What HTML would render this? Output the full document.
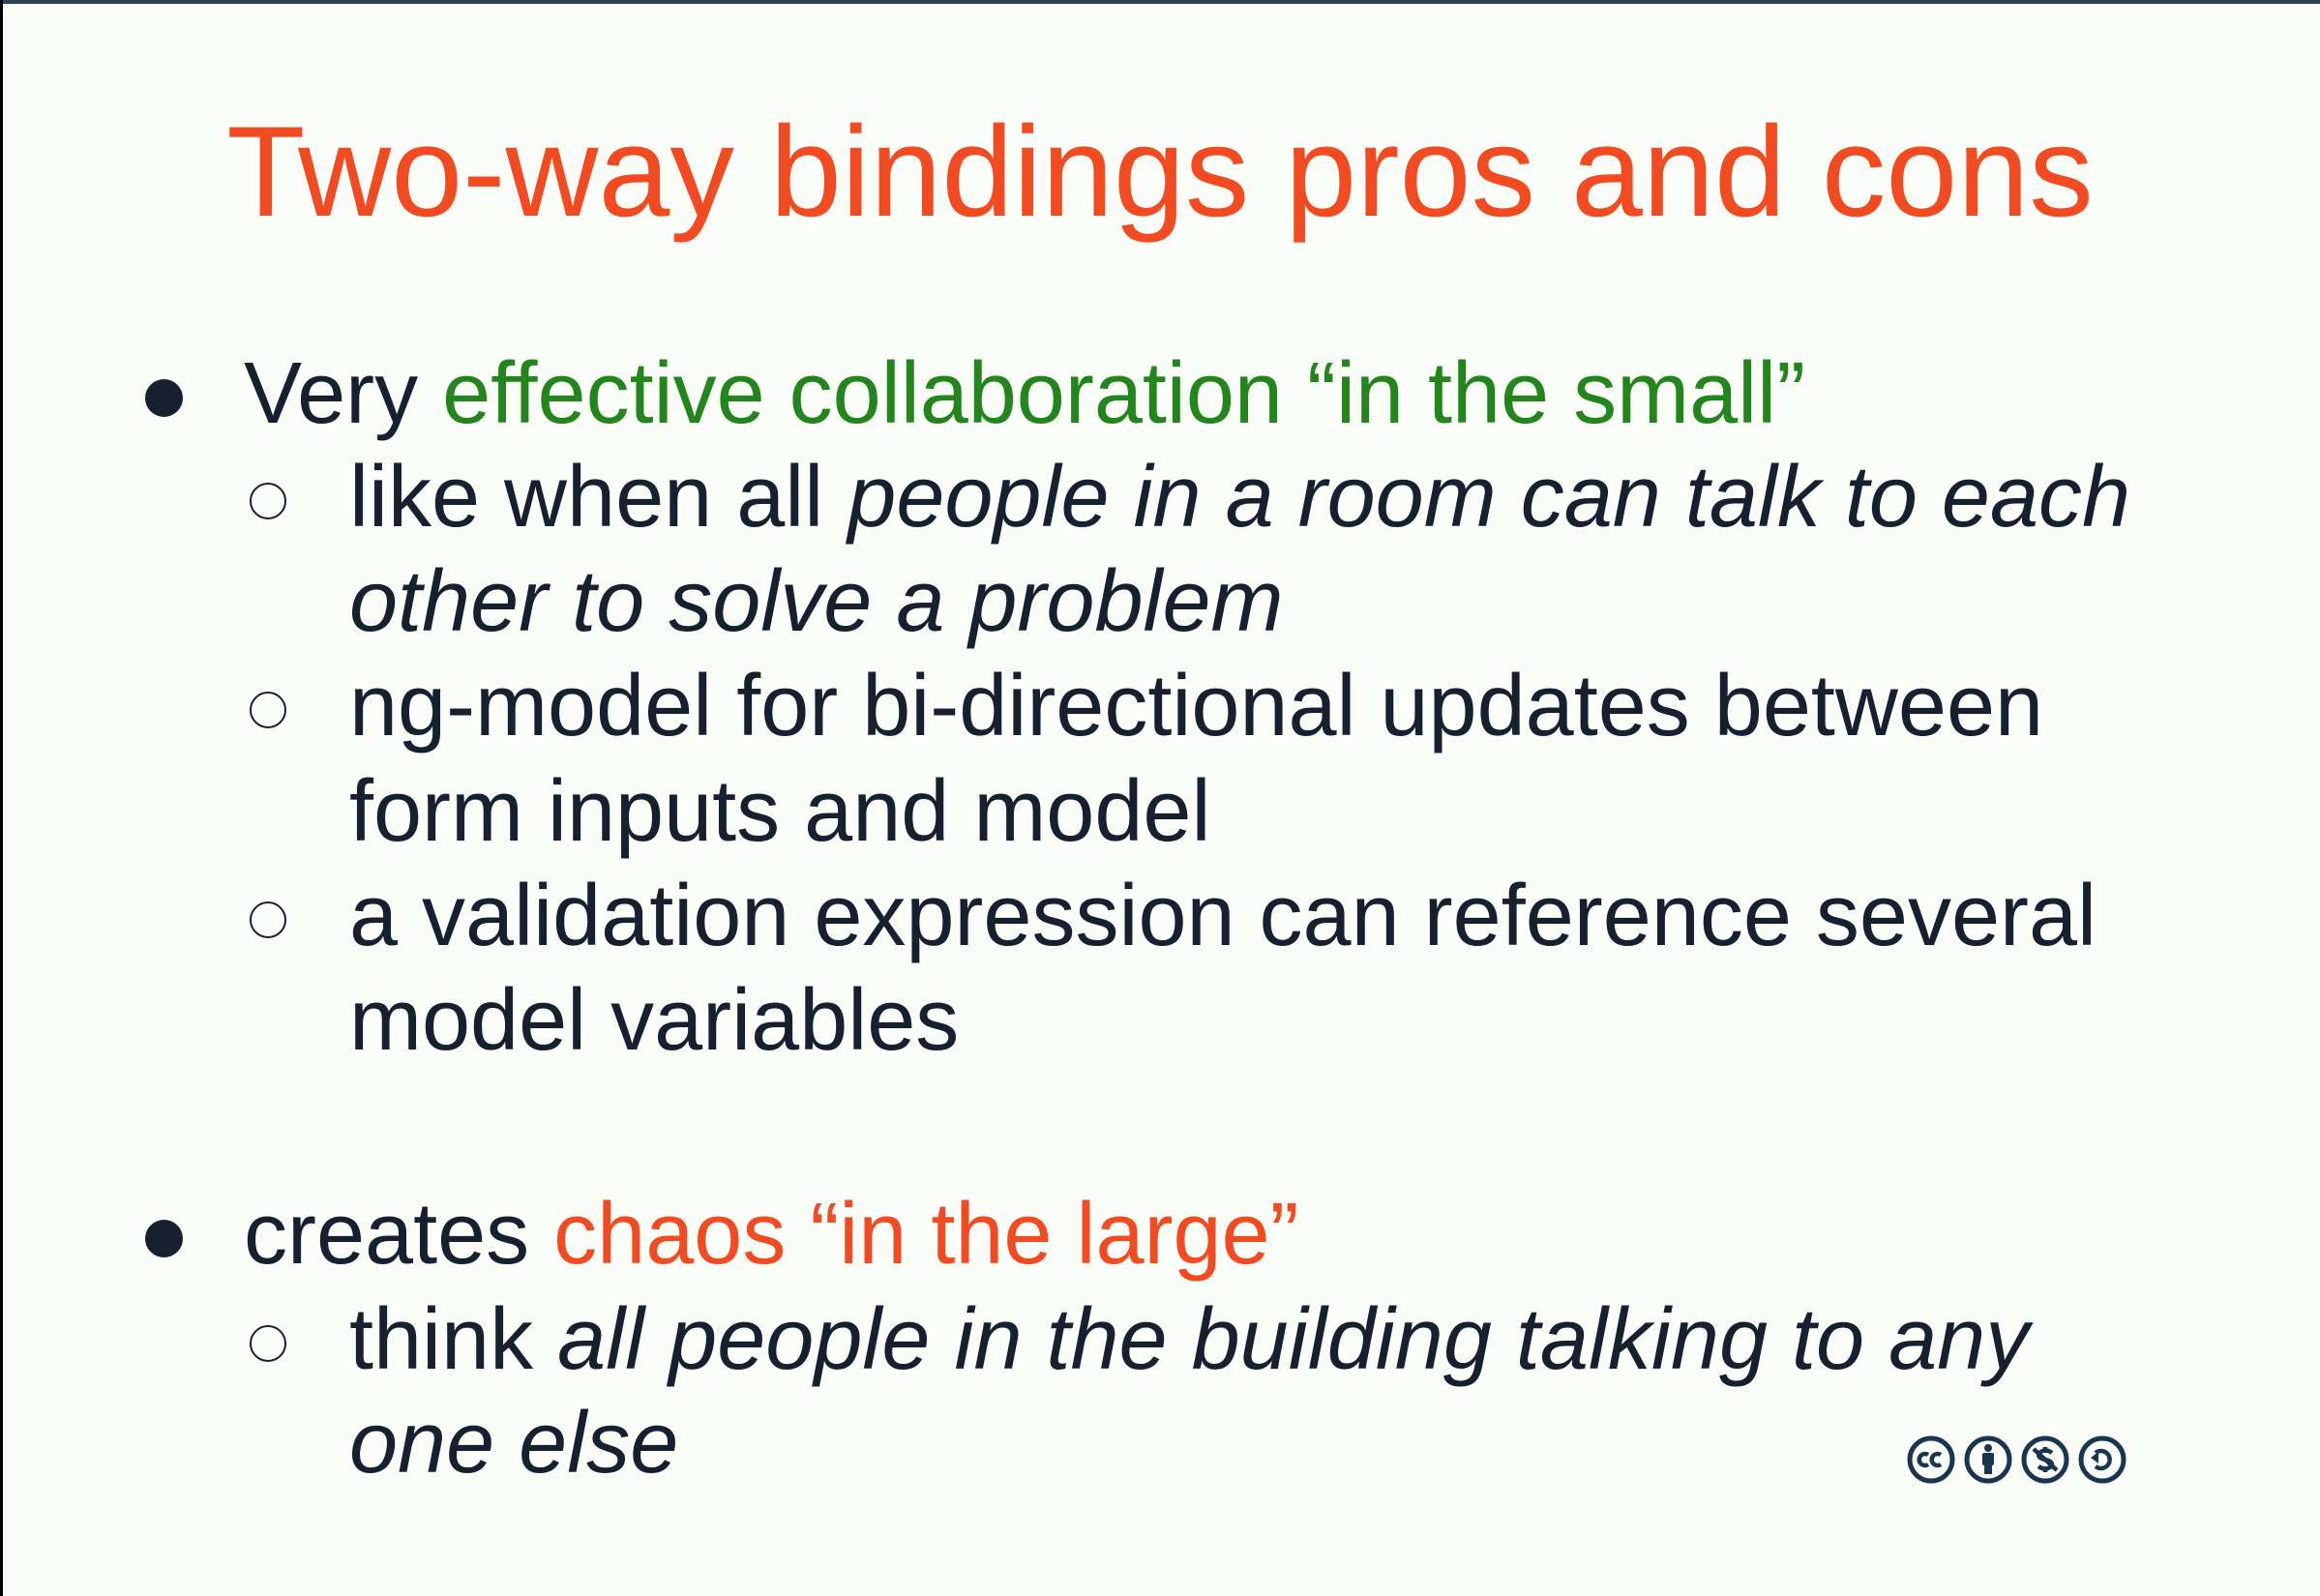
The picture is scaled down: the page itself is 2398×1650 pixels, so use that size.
<!DOCTYPE html>
<html><head><meta charset="utf-8"><style>
html,body{margin:0;padding:0}
body{width:2398px;height:1650px;background:#fbfef8;position:relative;overflow:hidden;font-family:"Liberation Sans",Arial,sans-serif;color:#17202f}
.topb{position:absolute;left:0;top:0;width:2398px;height:4px;background:#2c4455}
.leftb{position:absolute;left:0;top:0;width:3px;height:1650px;background:#000}
.t{position:absolute;white-space:nowrap;line-height:1;font-size:90px}
.title{position:absolute;left:0;width:2398px;text-align:center;top:112px;font-size:133px;line-height:1;color:#f24b22;white-space:nowrap}
.g{color:#23861c}.r{color:#f24b22}
i{font-style:italic}
.dot{position:absolute;width:39px;height:39px;border-radius:50%;background:#17202f}
.circ{position:absolute;width:34px;height:34px;border-radius:50%;border:2.5px solid #17202f}
</style></head><body>
<div class="topb"></div><div class="leftb"></div>
<div class="title">Two-way bindings pros and cons</div>

<div class="dot" style="left:150px;top:392px"></div>
<div class="t" style="left:252px;top:362px">Very <span class="g">effective collaboration “in the small”</span></div>

<div class="circ" style="left:258px;top:499px"></div>
<div class="t" style="left:361px;top:469px">like when all <i>people in a room can talk to each</i></div>
<div class="t" style="left:361px;top:577px"><i>other to solve a problem</i></div>

<div class="circ" style="left:258px;top:715px"></div>
<div class="t" style="left:361px;top:685px">ng-model for bi-directional updates between</div>
<div class="t" style="left:361px;top:794px">form inputs and model</div>

<div class="circ" style="left:258px;top:932px"></div>
<div class="t" style="left:361px;top:902px">a validation expression can reference several</div>
<div class="t" style="left:361px;top:1010px">model variables</div>

<div class="dot" style="left:150px;top:1261px"></div>
<div class="t" style="left:252px;top:1231px">creates <span class="r">chaos “in the large”</span></div>

<div class="circ" style="left:258px;top:1370px"></div>
<div class="t" style="left:361px;top:1340px">think <i>all people in the building talking to any</i></div>
<div class="t" style="left:361px;top:1447px"><i>one else</i></div>

<svg style="position:absolute;left:1970px;top:1482px" width="234" height="54" viewBox="0 0 234 54">
<g fill="none" stroke="#1a3550" stroke-width="5">
<circle cx="26" cy="27" r="22"/>
<circle cx="85" cy="27" r="22"/>
<circle cx="144" cy="27" r="22"/>
<circle cx="203" cy="27" r="22"/>
</g>
<g fill="none" stroke="#1a3550" stroke-width="4.5">
<path d="M23 22 a6 6 0 1 0 0 10"/>
<path d="M36 22 a6 6 0 1 0 0 10"/>
<path d="M132 16 L156 38"/>
<path d="M151 20 q-7 -5 -13 0 q-3 5 6 7 q9 2 6 7 q-6 5 -13 0"/>
<path d="M144 14 v6 M144 34 v6"/>
<path d="M196 20 a9 9 0 1 1 0 14"/>
</g>
<g fill="#1a3550">
<circle cx="85" cy="15" r="4"/>
<rect x="79" y="20" width="12" height="13" rx="2"/>
<rect x="81" y="30" width="8" height="12"/>
<path d="M191 25 l8 -6 v12z"/>
</g>
</svg>
</body></html>
